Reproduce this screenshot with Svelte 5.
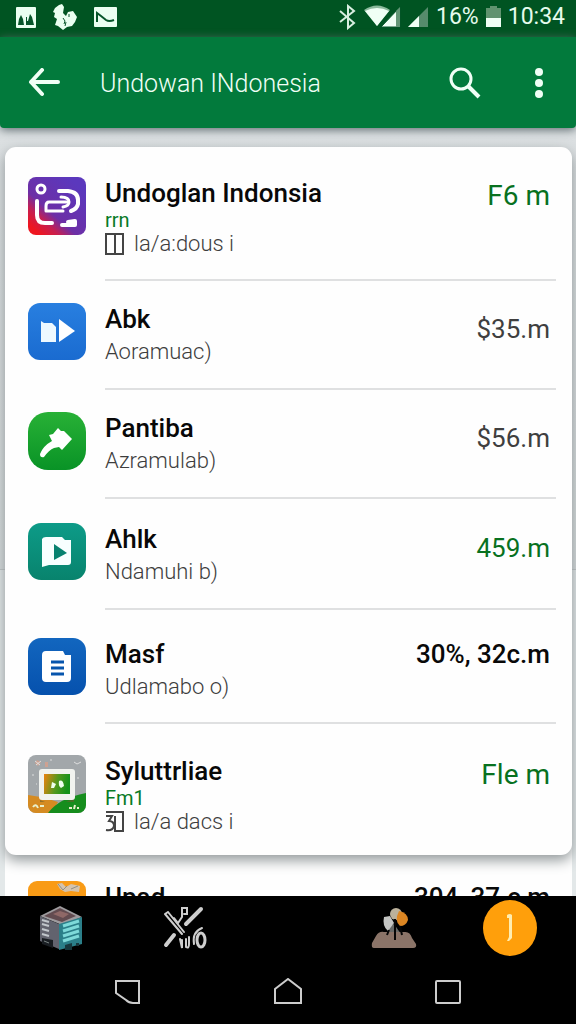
<script>
  const rows = [
    { icon: 'swirl', name: 'Undoglan Indonsia', tag: 'rrn', mark: 'box', sub: 'la/a:dous i', price: 'F6 m', tone: 'green', size: 'first' },
    { icon: 'media', name: 'Abk', sub: 'Aoramuac)', price: '$35.m', tone: 'grey', size: 'compact' },
    { icon: 'hammer', name: 'Pantiba', sub: 'Azramulab)', price: '$56.m', tone: 'grey', size: 'compact' },
    { icon: 'player', name: 'Ahlk', sub: 'Ndamuhi b)', price: '459.m', tone: 'green', size: 'medium' },
    { icon: 'doc', name: 'Masf', sub: 'Udlamabo o)', price: '30%, 32c.m', tone: 'black', size: 'roomy' },
    { icon: 'photo', name: 'Syluttrliae', tag: 'Fm1', mark: 'three', sub: 'la/a dacs i', price: 'Fle m', tone: 'green', size: 'last' }
  ];
  const next = { icon: 'orange', name: 'Upad', price: '304, 37.c m', tone: 'black', size: 'next' };
</script>

{#snippet appIcon(kind)}
  <svg class="app-icon" viewBox="0 0 58 58" aria-hidden="true">
    {#if kind === 'swirl'}
      <defs>
        <linearGradient id="purple" x1="0" y1="1" x2="0.8" y2="0.1">
          <stop offset="0.12" stop-color="#ee1620" /><stop offset="0.3" stop-color="#c51f52" />
          <stop offset="0.46" stop-color="#6d2fa6" /><stop offset="1" stop-color="#5b38bd" />
        </linearGradient>
      </defs>
      <rect width="58" height="58" rx="8" fill="url(#purple)" />
      <circle cx="13" cy="12" r="4" fill="none" stroke="#fff" stroke-width="3" />
      <g fill="none" stroke="#fff" stroke-width="4" stroke-linecap="round" stroke-linejoin="round">
        <path d="M9 24V38Q9 46 17 46H24" />
        <path d="M31 14H40Q50 15 50 23V27Q49 32 43 34" />
        <path d="M39 25H21Q18 25 18 29V34H35" stroke-width="3" />
        <path d="M33 20Q41 20 41 25Q41 29 35 30" stroke-width="3" />
        <path d="M34 48H47V44L40 45" />
      </g>
    {:else if kind === 'media'}
      <defs><linearGradient id="blue" x2="0" y2="1"><stop stop-color="#287fe0" /><stop offset="1" stop-color="#1a6bd0" /></linearGradient></defs>
      <rect width="58" height="57" rx="12" fill="url(#blue)" />
      <path d="M13 18L16 20L24 20L28 24V39H13Z" fill="#eef9ff" />
      <path d="M31 16L47 28L31 39Z" fill="#fff" />
    {:else if kind === 'hammer'}
      <defs><linearGradient id="green" x2="0" y2="1"><stop stop-color="#28b136" /><stop offset="1" stop-color="#099326" /></linearGradient></defs>
      <rect width="58" height="58" rx="20" fill="url(#green)" />
      <path d="M30 16L33 19L36 19L44 27L34 38L31 35L26 36Q21 38 16 45Q12 46 12 42Q15 34 24 29L21 23L25 22Z" fill="#fff" />
    {:else if kind === 'player'}
      <defs><linearGradient id="teal" x2="0" y2="1"><stop stop-color="#0d9b88" /><stop offset="1" stop-color="#08836d" /></linearGradient></defs>
      <rect width="58" height="57" rx="13" fill="url(#teal)" />
      <path d="M14 16Q15 14 18 14H34L37 17H43V39Q43 42 40 42H21L14 44Z" fill="#f8ffff" />
      <path d="M26 21L39 30L26 37Z" fill="#078270" />
    {:else if kind === 'doc'}
      <defs><linearGradient id="navy" x2="0" y2="1"><stop stop-color="#1266bf" /><stop offset="1" stop-color="#0651ad" /></linearGradient></defs>
      <rect width="58" height="57" rx="13" fill="url(#navy)" />
      <path d="M18 13H35L37 17H43V40Q43 44 39 44H18Q14 44 14 40V17Q14 13 18 13Z" fill="#fff" />
      <path d="M23 24H36M23 30H36M23 36H36" stroke="#0755ad" stroke-width="3" fill="none" />
    {:else if kind === 'photo'}
      <defs>
        <clipPath id="photo-clip"><rect width="58" height="58" rx="8" /></clipPath>
        <linearGradient id="screen" x2="1" y2="0.2"><stop stop-color="#ed8210" /><stop offset="0.55" stop-color="#53981d" /><stop offset="1" stop-color="#149219" /></linearGradient>
      </defs>
      <g clip-path="url(#photo-clip)">
        <rect width="58" height="58" fill="#a2a7aa" />
        <path d="M0 40Q16 42 30 47L24 58H0Z" fill="#d58b22" />
        <path d="M20 58Q31 43 58 38V58Z" fill="#168d1d" />
        <path d="M7 8L9 5L13 7L10 11ZM17 7H20V12H17Z" fill="#cda191" />
        <path d="M7 6L12 10M8 10L13 6M46 7L49 9L53 7M4 20H6M8 29H9M49 23H51M22 5H24" stroke="#dddede" fill="none" />
        <path d="M12 45L17 47H38L46 43V47H12Z" fill="#675f2c" opacity="0.6" />
        <rect x="11" y="14" width="36" height="31" rx="3" fill="#f1f3ef" />
        <rect x="16" y="19" width="26" height="20" fill="url(#screen)" />
        <path d="M24 27L28 29L26 33H23ZM31 26Q35 24 36 31L33 33Q30 31 31 26Z" fill="#efffed" />
        <path d="M5 52Q8 48 10 53M12 51H16M41 53H44M47 50L46 54M50 52V54" stroke="#e9f0cc" stroke-width="2" fill="none" />
      </g>
    {:else}
      <rect width="58" height="58" rx="9" fill="#f99b16" />
      <path d="M29 3L34 2L38 6L43 3L52 5L51 11L43 10L37 11L32 8Z" fill="#d5c3ad" />
      <path d="M30 3L35 9L39 5M43 8L50 5" stroke="#8d8f87" fill="none" />
    {/if}
  </svg>
{/snippet}

{#snippet item(row)}
  <li class="row {row.size}">
    {@render appIcon(row.icon)}
    <div class="body">
      <div class="text">
        <h2>{row.name}</h2>
        {#if row.tag}<p class="tag">{row.tag}</p>{/if}
        {#if row.sub}
          <p class="sub" class:tight={row.tag}>
            {#if row.mark}
              <svg class="mark" viewBox="0 0 20 24" aria-hidden="true">
                {#if row.mark === 'box'}
                  <path d="M1 2H18V22H1ZM10 2V22" />
                {:else}
                  <path d="M1 2H18V21H10V6M1 6H7L4 11Q9 11 9 16Q8 21 1 20" />
                {/if}
              </svg>
            {/if}
            <span>{row.sub}</span>
          </p>
        {/if}
      </div>
      <span class="price {row.tone}">{row.price}</span>
    </div>
  </li>
{/snippet}

<div class="screen">
  <div class="status">
    <div class="notices">
      <svg width="20" height="21" viewBox="0 0 20 21" aria-hidden="true"><rect width="20" height="21" rx="1" fill="#eafff1" /><path d="M2 18L3 12L5 8L7 12L8 18ZM10 18V10H11V14H12L14 7L16 10L18 18Z" fill="#07552a" /></svg>
      <svg width="24" height="26" viewBox="0 0 24 26" aria-hidden="true"><path d="M6 1L9 0L11 3L10 9L13 12L15 8L20 7L24 13L22 18L19 22L14 23L10 26L5 22L2 21L4 15L1 13L2 9L0 8L2 4Z" fill="#eafff1" /><path d="M10 14L12 17L11 20M16 10V13M13 18L12 22" stroke="#07552a" fill="none" /></svg>
      <svg width="23" height="21" viewBox="0 0 23 21" aria-hidden="true"><rect width="23" height="20" rx="1" fill="#eafff1" /><path d="M3 15V6L7 9L12 13Q15 15 20 13" fill="none" stroke="#07552a" stroke-width="2" /></svg>
    </div>
    <div class="system">
      <svg width="18" height="26" viewBox="0 0 18 26" aria-hidden="true"><path d="M1 7L15 19L9 24V2L15 7L1 18" fill="none" stroke="#d8eee0" stroke-width="2" /></svg>
      <svg width="37" height="24" viewBox="0 0 37 24" aria-hidden="true"><path d="M0 5Q13-4 26 5L13 21Z" fill="#8bb99c" /><path d="M1 6Q13 0 25 6L13 21Z" fill="#f0fff5" /><path d="M17 22L36 2V22Z" fill="#f0fff5" stroke="#07552a" stroke-width="1" /><path d="M32 6L36 2V22H32Z" fill="#629675" /></svg>
      <svg width="21" height="24" viewBox="0 0 21 24" aria-hidden="true"><path d="M0 22L20 2V22Z" fill="#568b6c" /><path d="M0 22L11 11V22Z" fill="#f0fff5" /></svg>
      <span>16%</span>
      <svg width="15" height="24" viewBox="0 0 15 24" aria-hidden="true"><path d="M4 1H11V3H15V13H0V3H4Z" fill="#60936f" /><path d="M0 13H15V22H0Z" fill="#f0fff5" /></svg>
      <span>10:34</span>
    </div>
  </div>

  <header>
    <button aria-label="Back"><svg width="32" height="30" viewBox="0 0 32 30"><path d="M30 14H3M14 2L3 14L14 26" fill="none" stroke="currentColor" stroke-width="4" stroke-linecap="round" stroke-linejoin="round" /></svg></button>
    <h1>Undowan INdonesia</h1>
    <button aria-label="Search"><svg width="32" height="32" viewBox="0 0 32 32"><circle cx="12" cy="12" r="10" fill="none" stroke="currentColor" stroke-width="3" /><path d="M19 19L30 30" stroke="currentColor" stroke-width="4" /></svg></button>
    <button class="more" aria-label="More options"><svg width="8" height="30" viewBox="0 0 8 30" fill="currentColor"><circle cx="4" cy="4" r="4" /><circle cx="4" cy="15" r="4" /><circle cx="4" cy="26" r="4" /></svg></button>
  </header>

  <main>
    <ul class="card">
      {#each rows as row}{@render item(row)}{/each}
    </ul>
    <ul class="card under">{@render item(next)}</ul>
  </main>

  <footer>
    <nav class="dock" aria-label="Apps">
      <button aria-label="Building">
        <svg width="44" height="46" viewBox="0 0 44 46">
          <path d="M21 1L43 12L23 20L1 11Z" fill="#9e9b9e" /><path d="M21 3L37 11L23 17L5 11Z" fill="#624b50" /><path d="M21 6L30 9L24 13L14 9Z" fill="#8f6867" />
          <path d="M1 11L20 19V44L1 36Z" fill="#62636e" /><path d="M20 19L43 12V39L20 45Z" fill="#2b7f89" />
          <path d="M3 15L10 17M3 19L10 21M3 24L10 26M3 29L10 31" stroke="#c1c6cb" stroke-width="2" />
          <path d="M24 21L40 16M24 26L40 21M24 31L40 26M24 36L40 31" stroke="#7dd9d9" stroke-width="3" />
          <path d="M3 33L14 35V43L3 39Z" fill="#191d22" /><path d="M26 40L33 38V45H26ZM37 38H40V41H37Z" fill="#17373d" />
          <path d="M5 36L10 38" stroke="#7b8584" />
        </svg>
      </button>
      <button aria-label="Tools">
        <svg width="46" height="46" viewBox="0 0 46 46" fill="none" stroke="#cecece" stroke-linecap="round">
          <path d="M3 9L20 29M6 7L22 27M3 9L6 7" stroke-width="2" /><path d="M12 13L16 18L20 12V3H25V9H22" stroke-width="2" />
          <path d="M39 4L24 19M12 30L4 40" stroke-width="4" /><path d="M18 34L20 43V35M24 34V42Q27 44 27 39V32M32 39Q30 27 40 23" stroke-width="2" /><ellipse cx="39" cy="35" rx="4" ry="7" stroke-width="3" />
        </svg>
      </button>
      <button aria-label="Garden">
        <svg width="46" height="42" viewBox="0 0 46 42">
          <path d="M17 20L23 17L30 27V32H17Z" fill="#686a68" /><path d="M5 29Q8 24 13 25H33Q39 24 41 31L45 37Q46 41 42 41H3Q0 41 1 36Z" fill="#8b7468" />
          <path d="M13 10L19 9L23 16L17 24Q11 19 13 10Z" fill="#c4c5c3" /><circle cx="25" cy="7" r="6" fill="#bbb19b" /><path d="M28 4Q37 6 37 13Q35 19 29 19Q23 14 28 4Z" fill="#dc8623" />
          <path d="M24 12V33M18 23L16 28M29 19L31 28" stroke="#070707" stroke-width="2" />
        </svg>
      </button>
      <button class="coin" aria-label="Notifications"><svg width="8" height="28" viewBox="0 0 8 28"><path d="M1 1Q4-1 6 1V24L3 27H1L3 23V4H1Z" fill="#ffedb0" /></svg></button>
    </nav>
    <nav class="keys" aria-label="System navigation">
      <button aria-label="Go back"><svg width="28" height="28" viewBox="0 0 28 28"><path d="M2 3H25V25H19Q15 25 12 22L2 15Z" /></svg></button>
      <button aria-label="Home"><svg width="28" height="28" viewBox="0 0 28 28"><path d="M1 11L14 1L27 11V25H1Z" /></svg></button>
      <button aria-label="Recent apps"><svg width="28" height="28" viewBox="0 0 28 28"><rect x="2" y="3" width="24" height="22" rx="1" /></svg></button>
    </nav>
  </footer>
</div>

<style>
  .screen { height: 100vh; display: flex; flex-direction: column; overflow: hidden; background: #e0e4e5; font-family: Roboto, "Noto Sans", sans-serif; }
  h1, h2, p, ul { margin: 0; padding: 0; }
  svg { display: block; flex: none; }
  button { border: 0; padding: 0; background: none; color: inherit; display: grid; place-items: center; cursor: pointer; }
  .status { flex: none; height: 37px; box-sizing: border-box; padding: 0 11px 3px 16px; display: flex; align-items: center; justify-content: space-between; background: #005422; color: #e5fbed; font-size: 23px; line-height: 30px; }
  .notices { display: flex; align-items: center; gap: 17px; }
  .system { display: flex; align-items: center; gap: 7px; }
  header { flex: none; height: 91px; box-sizing: border-box; display: flex; align-items: center; padding: 0 33px 0 28px; background: #027a3c; color: #f0fff6; border-radius: 0 0 4px 4px; box-shadow: 0 2px 10px #5f6c70; z-index: 1; }
  h1 { flex: 1; margin-left: 40px; padding-top: 2px; font-size: 25px; line-height: 36px; font-weight: 300; white-space: nowrap; }
  .more { margin-left: 54px; }
  main { flex: 1; min-height: 0; overflow: hidden; padding: 19px 4px 0 5px; background: linear-gradient(#dce0e2, #d5dadb 441px, #bbc0c1 441px, #bbc0c1 442px, #e3e8e9 442px); }
  .card { list-style: none; background: #fefefe; border-radius: 11px; position: relative; z-index: 1; box-shadow: 0 5px 14px #8d9496; }
  .card.under { z-index: 0; border-radius: 0; box-shadow: none; margin-top: -20px; padding-top: 20px; }
  .row { display: flex; gap: 19px; padding-left: 23px; }
  .app-icon { width: 58px; height: 58px; margin-top: var(--top); }
  .body { flex: 1; min-width: 0; display: flex; justify-content: space-between; padding: var(--top) 6px var(--bottom) 0; margin-right: 16px; border-bottom: 2px solid #dfe0e1; }
  .first { --top: 30px; --bottom: 22px; --drop: 3px; }
  .compact { --top: 22px; --bottom: 19px; --drop: 10px; }
  .medium { --top: 24px; --bottom: 19px; --drop: 9px; }
  .roomy { --top: 28px; --bottom: 18px; --drop: 0px; }
  .last { --top: 31px; --bottom: 20px; --drop: 4px; }
  .next { --top: 26px; --bottom: 22px; --drop: 0px; }
  .last .body { border: 0; }
  h2 { font-size: 26px; line-height: 32px; font-weight: 500; color: #080808; white-space: nowrap; }
  .sub { display: flex; align-items: center; gap: 9px; font-size: 22px; line-height: 34px; font-weight: 300; color: #3d3d3d; white-space: nowrap; }
  .tight { line-height: 26px; }
  .tag { font-size: 20px; line-height: 22px; color: #087a26; }
  .mark { width: 20px; height: 24px; fill: none; stroke: #444; stroke-width: 2; }
  .price { font-size: 26px; line-height: 32px; padding-top: var(--drop); white-space: nowrap; }
  .first .price, .last .price { font-size: 28px; }
  .green { color: #08711f; }
  .grey { color: #3f3f3f; }
  .black { color: #090909; font-weight: 500; }
  footer { flex: none; background: #000; color: #ccc; z-index: 2; }
  .dock { height: 64px; padding: 0 39px; display: flex; align-items: center; justify-content: space-between; }
  .dock button:nth-child(2) { margin-left: 79px; margin-right: auto; }
  .dock button:nth-child(3) { margin-right: 66px; }
  .coin { width: 54px; height: 56px; border-radius: 50%; background: #ff9f0b; }
  .keys { height: 64px; display: flex; justify-content: center; gap: 132px; align-items: center; }
  .keys svg { fill: none; stroke: #ccc; stroke-width: 2; }
</style>
